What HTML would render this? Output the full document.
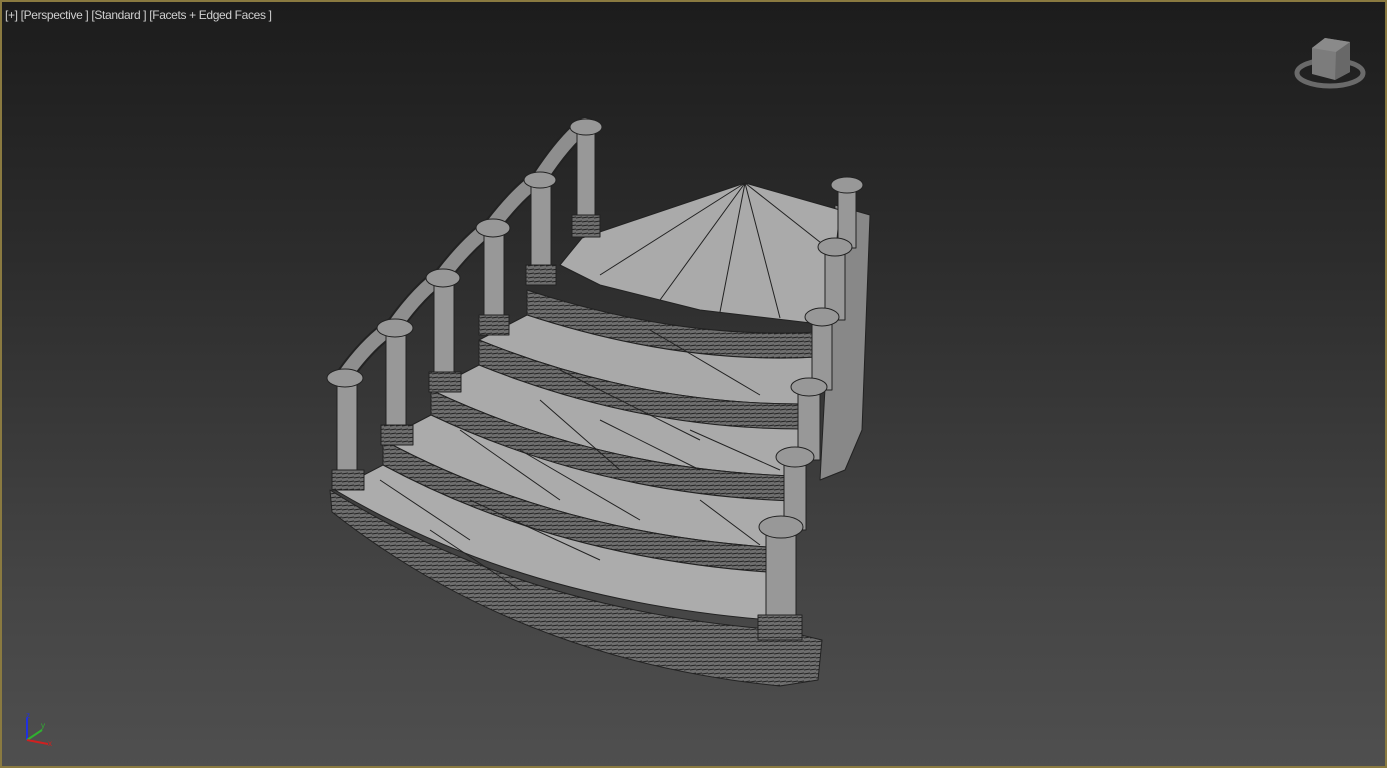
<!DOCTYPE html>
<html><head><style>
html,body{margin:0;padding:0;}
body{width:1387px;height:768px;overflow:hidden;position:relative;background:linear-gradient(#1c1c1c 0%,#2d2d2d 35%,#444 75%,#4f4f4f 100%);font-family:"Liberation Sans",sans-serif;}
.frame{position:absolute;left:0;top:0;width:1383px;height:764px;border:2px solid #8a7a40;}
.lbl{position:absolute;left:5px;top:8px;color:#d0d0d0;font-size:12px;letter-spacing:-0.35px;}
svg{position:absolute;left:0;top:0;}
</style></head><body>
<svg width="1387" height="768" viewBox="0 0 1387 768">
<defs>
<pattern id="h" width="6" height="4" patternUnits="userSpaceOnUse"><rect width="6" height="4" fill="#6e6e6e"/><path d="M0 2L6 1" stroke="#222" stroke-width="0.9"/></pattern>
</defs>
<g stroke="#222" stroke-width="1" stroke-linejoin="round">
<polygon points="835,205 870,215 862,430 845,470 820,480" fill="#888"/>
<path d="M330,490 Q520,610 780,630 L822,640 L818,680 L780,686 Q520,660 332,512 Z" fill="url(#h)"/>
<polygon points="582,238 745,183 840,210 828,325 700,310 600,285 560,265" fill="#aaaaaa"/>
<path d="M745,183 L600,275 M745,183 L660,300 M745,183 L720,312 M745,183 L780,318 M745,183 L830,250" fill="none"/>
<path d="M527,290 Q680,340 818,332 L818,357 Q680,365 527,315 Z" fill="url(#h)"/>
<path d="M479,340 Q640,405 806,404 L818,357 Q680,365 527,315 Z" fill="#a9a9a9"/>
<path d="M479,340 Q640,405 806,404 L806,429 Q640,430 479,365 Z" fill="url(#h)"/>
<path d="M431,390 Q600,470 794,476 L806,429 Q640,430 479,365 Z" fill="#aaaaaa"/>
<path d="M431,390 Q600,470 794,476 L794,501 Q600,495 431,415 Z" fill="url(#h)"/>
<path d="M383,440 Q560,535 782,548 L794,501 Q600,495 431,415 Z" fill="#ababab"/>
<path d="M383,440 Q560,535 782,548 L782,573 Q560,560 383,465 Z" fill="url(#h)"/>
<path d="M335,490 Q520,600 770,620 L782,573 Q560,560 383,465 Z" fill="#acacac"/>
<path d="M600,420 L700,470 M520,450 L640,520 M470,500 L600,560 M560,370 L700,440 M650,330 L760,395 M430,530 L520,590 M380,480 L470,540 M540,400 L620,470 M460,430 L560,500 M700,500 L760,545 M690,430 L780,470" fill="none"/>
<path d="M345,375 Q370,340 395,325 Q420,290 443,275 Q470,240 493,225 Q520,190 540,178 Q565,140 585,125" fill="none" stroke="#222" stroke-width="18" stroke-linecap="round"/>
<path d="M345,375 Q370,340 395,325 Q420,290 443,275 Q470,240 493,225 Q520,190 540,178 Q565,140 585,125" fill="none" stroke="#8e8e8e" stroke-width="14" stroke-linecap="round"/>
<g fill="#989898">
<rect x="337" y="380" width="20" height="100"/><rect x="332" y="470" width="32" height="20" fill="url(#h)"/><ellipse cx="345" cy="378" rx="18" ry="9"/>
<rect x="386" y="330" width="20" height="100"/><rect x="381" y="425" width="32" height="20" fill="url(#h)"/><ellipse cx="395" cy="328" rx="18" ry="9"/>
<rect x="434" y="280" width="20" height="100"/><rect x="429" y="372" width="32" height="20" fill="url(#h)"/><ellipse cx="443" cy="278" rx="17" ry="9"/>
<rect x="484" y="230" width="20" height="90"/><rect x="479" y="315" width="30" height="20" fill="url(#h)"/><ellipse cx="493" cy="228" rx="17" ry="9"/>
<rect x="531" y="182" width="20" height="90"/><rect x="526" y="265" width="30" height="20" fill="url(#h)"/><ellipse cx="540" cy="180" rx="16" ry="8"/>
<rect x="577" y="130" width="18" height="90"/><rect x="572" y="215" width="28" height="22" fill="url(#h)"/><ellipse cx="586" cy="127" rx="16" ry="8"/>
</g>
<g fill="#989898">
<rect x="838" y="188" width="18" height="60"/><ellipse cx="847" cy="185" rx="16" ry="8"/>
<rect x="825" y="250" width="20" height="70"/><ellipse cx="835" cy="247" rx="17" ry="9"/>
<rect x="812" y="320" width="20" height="70"/><ellipse cx="822" cy="317" rx="17" ry="9"/>
<rect x="798" y="390" width="22" height="70"/><ellipse cx="809" cy="387" rx="18" ry="9"/>
<rect x="784" y="460" width="22" height="70"/><ellipse cx="795" cy="457" rx="19" ry="10"/>
<rect x="766" y="530" width="30" height="90"/><ellipse cx="781" cy="527" rx="22" ry="11"/>
<rect x="758" y="615" width="44" height="25" fill="url(#h)"/>
</g>
</g>
<ellipse cx="1330" cy="73" rx="33" ry="13" fill="none" stroke="#6a6a6a" stroke-width="5"/>
<polygon points="1312,48 1325,38 1350,42 1350,72 1335,80 1312,74" fill="#7c7c7c"/>
<polygon points="1312,48 1325,38 1350,42 1336,52" fill="#8a8a8a"/>
<polygon points="1336,52 1350,42 1350,72 1335,80" fill="#686868"/>
<g stroke-width="2" fill="none">
<path d="M27,740 V718" stroke="#2030e0"/>
<path d="M27,740 L42,730" stroke="#30b030"/>
<path d="M27,740 L48,744" stroke="#d02020"/>
</g>
<text x="26" y="718" fill="#2030e0" font-size="8" font-family="Liberation Sans">z</text>
<text x="41" y="728" fill="#30b030" font-size="8" font-family="Liberation Sans">y</text>
<text x="48" y="746" fill="#d02020" font-size="8" font-family="Liberation Sans">x</text>
</svg>
<div class="frame"></div>
<div class="lbl">[+] [Perspective ] [Standard ] [Facets + Edged Faces ]</div>
</body></html>
